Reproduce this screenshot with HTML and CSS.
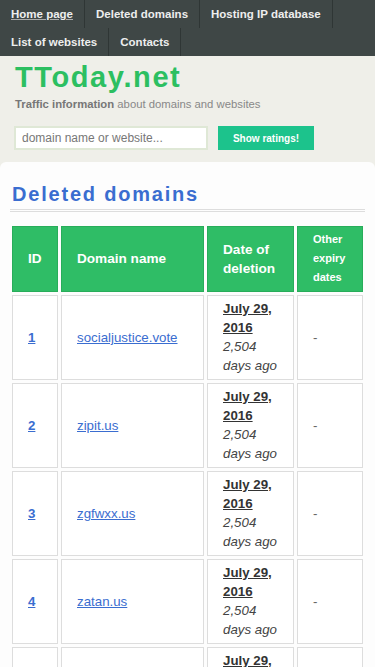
FILE: index.html
```
<!DOCTYPE html>
<html lang="en">
<head>
  <meta charset="UTF-8">
  <title>Deleted domains - TToday.net</title>
  <link rel="stylesheet" href="styles.css">
</head>
<body>
  <!-- top menu -->
  <nav class="menu">
    <a class="active" href="#">Home page</a>
    <a href="#">Deleted domains</a>
    <a href="#">Hosting IP database</a>
    <a href="#">List of websites</a>
    <a href="#">Contacts</a>
  </nav>
  <!-- logo + search -->
  <header class="top">
    <div class="logo">TToday.net</div>
    <div class="slogan"><b>Traffic information</b> about domains and websites</div>
    <form class="search">
      <input type="text" placeholder="domain name or website...">
      <button type="button">Show ratings!</button>
    </form>
  </header>
  <div class="card">
    <h1>Deleted domains</h1>
    <div class="title-line"></div>
    <table class="list">
      <tr>
        <th class="c-id">ID</th>
        <th class="c-name">Domain name</th>
        <th class="c-date">Date of deletion</th>
        <th class="c-other">Other expiry dates</th>
      </tr>
      <tr>
        <td><a class="num" href="#">1</a></td>
        <td><a href="#">socialjustice.vote</a></td>
        <td><a class="date" href="#">July 29, 2016</a><br><i>2,504 days ago</i></td>
        <td class="dash">-</td>
      </tr>
      <tr>
        <td><a class="num" href="#">2</a></td>
        <td><a href="#">zipit.us</a></td>
        <td><a class="date" href="#">July 29, 2016</a><br><i>2,504 days ago</i></td>
        <td class="dash">-</td>
      </tr>
      <tr>
        <td><a class="num" href="#">3</a></td>
        <td><a href="#">zgfwxx.us</a></td>
        <td><a class="date" href="#">July 29, 2016</a><br><i>2,504 days ago</i></td>
        <td class="dash">-</td>
      </tr>
      <tr>
        <td><a class="num" href="#">4</a></td>
        <td><a href="#">zatan.us</a></td>
        <td><a class="date" href="#">July 29, 2016</a><br><i>2,504 days ago</i></td>
        <td class="dash">-</td>
      </tr>
      <tr>
        <td><a class="num" href="#">5</a></td>
        <td><a href="#">yourvote.vote</a></td>
        <td><a class="date" href="#">July 29, 2016</a><br><i>2,504 days ago</i></td>
        <td class="dash">-</td>
      </tr>
    </table>
  </div>
</body>
</html>
```
FILE: styles.css
```
body { margin:0; background:#efefe9; font-family:'Liberation Sans', Arial, sans-serif; color:#333; }

.menu { display:flex; flex-wrap:wrap; background:#3f4746; }
.menu a { height:28px; line-height:28px; padding:0 11px; border-right:1px solid #2f3635; color:#eee; font-size:11.5px; font-weight:700; text-decoration:none; }
.menu a.active { text-decoration:underline; text-decoration-color:#aaa; }

.top { padding:4px 14px 12px 15px; }
.logo { color:#2cbf61; font-size:29px; line-height:34px; font-weight:700; letter-spacing:1.6px; }
.slogan { margin-top:2px; font-size:11.3px; line-height:16px; color:#888; }
.slogan b { color:#777; }
.search { display:flex; gap:10px; margin-top:14px; margin-left:-1px; }
.search input { box-sizing:border-box; width:194px; height:24px; margin:0; padding:0 6px; border:2px solid #dfe8d6; background:#fff; font-family:inherit; font-size:12px; color:#555; outline:0; }
.search input::placeholder { color:#777; }
.search button { width:96px; height:24px; border:0; background:#1cc38c; color:#fff; font-family:inherit; font-size:10px; font-weight:700; cursor:pointer; }

.card { background:#fdfdfd; border-radius:6px 6px 0 0; padding:20px 10px 30px; }
.card h1 { margin:0 0 3px 2px; color:#3a6dd0; font-size:20px; line-height:24px; font-weight:700; letter-spacing:1.8px; }
.title-line { height:1px; border-top:1px solid #ddd; border-bottom:1px solid #ddd; }

.list { table-layout:fixed; width:calc(100% + 2px); margin:11px -1px 0; border-collapse:separate; border-spacing:3px; }
.list th, .list td { box-sizing:border-box; padding:3px 8px 4px 15px; line-height:19px; font-size:13.3px; text-align:left; vertical-align:middle; }
.list th { background:#2fbd66; border:1px solid #28ad5a; color:#fff; font-weight:700; font-size:13.6px; }
.list td { background:#fff; border:1px solid #ddd; color:#444; }
.list .c-id { width:46px; }
.list .c-name { width:143px; }
.list .c-date { width:87px; }
.list th.c-other { font-size:11px; }
.list a { color:#3a6dd0; }
.list a.num { font-weight:700; }
.list a.date { color:#333; font-weight:700; }
.list i { color:#444; }
.list td.dash { color:#666; }
```
